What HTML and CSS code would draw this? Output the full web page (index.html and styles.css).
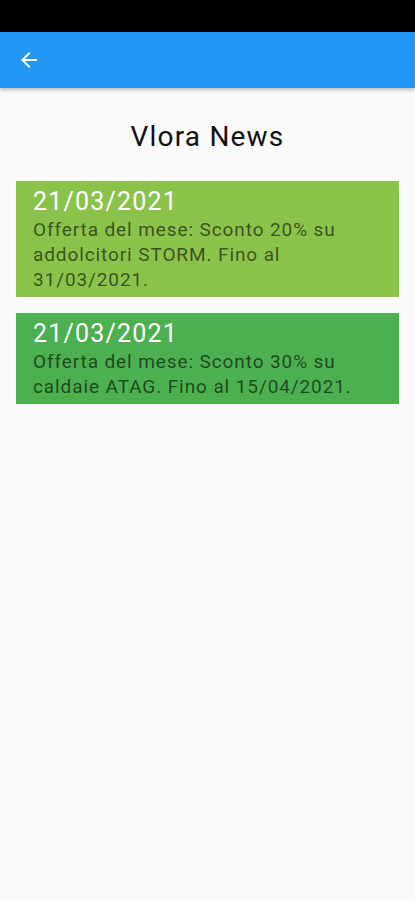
FILE: index.html
```html
<!DOCTYPE html>
<html lang="it">
<head>
<meta charset="utf-8">
<link rel="stylesheet" href="styles.css">
</head>
<body>
<div class="status"></div>
<header class="appbar">
  <button class="back" aria-label="Indietro">
    <svg width="24" height="24" viewBox="0 0 24 24"><path d="M20 11H7.83l5.59-5.59L12 4l-8 8 8 8 1.41-1.41L7.83 13H20v-2z" fill="#fff"/></svg>
  </button>
</header>
<main class="content">
  <h1 class="title">Vlora News</h1>
  <div class="list">
    <article class="card card-light">
      <div class="date">21/03/2021</div>
      <p class="text">Offerta del mese: Sconto 20% su addolcitori STORM. Fino al 31/03/2021.</p>
    </article>
    <article class="card card-dark">
      <div class="date">21/03/2021</div>
      <p class="text">Offerta del mese: Sconto 30% su caldaie ATAG. Fino al 15/04/2021.</p>
    </article>
  </div>
</main>
</body>
</html>
```
FILE: styles.css
```css
html, body {
  margin: 0;
  padding: 0;
  background: #fafafa;
  font-family: Roboto, "Noto Sans", sans-serif;
}
.status {
  height: 32px;
  background: #000;
}
.appbar {
  height: 56px;
  background: #2196f3;
  display: flex;
  align-items: center;
  padding-left: 17px;
  box-shadow: 0 2px 4px rgba(0,0,0,0.25);
  position: relative;
}
.back {
  border: 0;
  background: none;
  padding: 0;
  width: 24px;
  height: 24px;
  display: flex;
}
.content {
  padding: 0 16px;
}
.title {
  margin: 0;
  padding-top: 31px;
  height: 36px;
  line-height: 36px;
  text-align: center;
  font-size: 28px;
  letter-spacing: 1.2px;
  font-weight: 400;
  color: #111;
}
.list {
  margin-top: 26px;
  display: flex;
  flex-direction: column;
  gap: 16px;
}
.card {
  padding: 6px 17px 5px;
  box-shadow: 0 5px 6px rgba(255,255,255,0.9), 0 2px 3px rgba(0,0,0,0.06);
}
.card-light { background: #8bc34a; }
.card-dark { background: #4caf50; }
.date {
  color: #fff;
  font-size: 25px;
  letter-spacing: 1.2px;
  line-height: 30px;
}
.text {
  margin: 0;
  color: rgba(0,0,0,0.6);
  font-size: 19px;
  letter-spacing: 0.9px;
  line-height: 25px;
}
```
